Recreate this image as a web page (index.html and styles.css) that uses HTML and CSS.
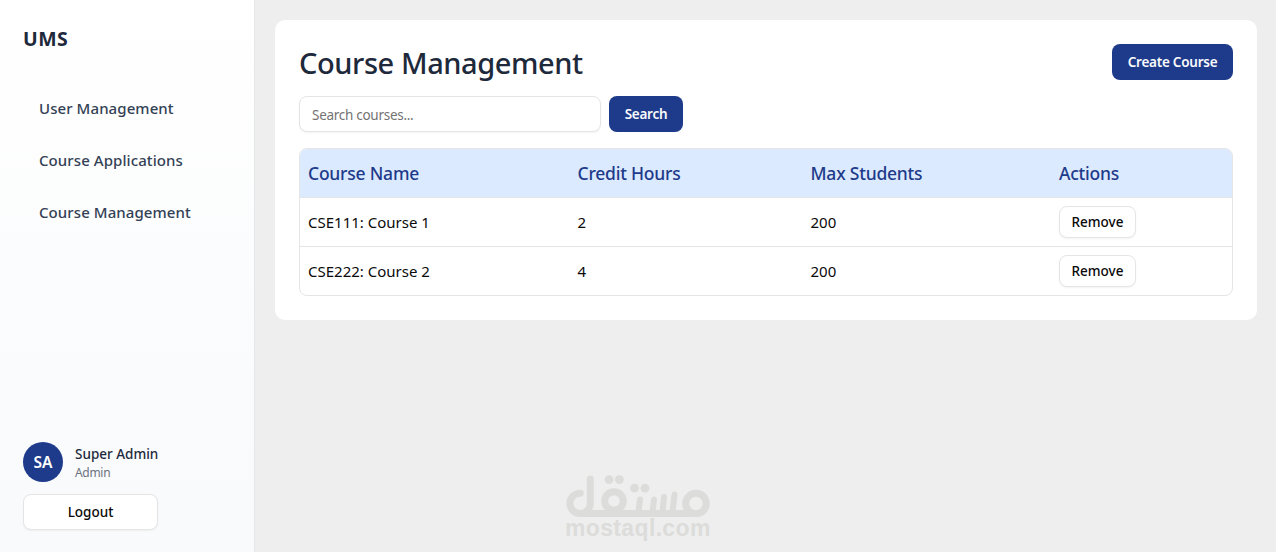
FILE: index.html
```
<!DOCTYPE html>
<html lang="en">
<head>
<meta charset="utf-8">
<title>UMS - Course Management</title>
<link rel="stylesheet" href="styles.css">
</head>
<body>
<div class="app">
  <aside class="sidebar">
    <div class="brand"><span class="brand-name">UMS</span></div>
    <nav class="nav">
      <a class="nav-link">User Management</a>
      <a class="nav-link">Course Applications</a>
      <a class="nav-link">Course Management</a>
    </nav>
    <div class="account">
      <div class="profile">
        <div class="avatar">SA</div>
        <div class="identity">
          <div class="user-name">Super Admin</div>
          <div class="user-role">Admin</div>
        </div>
      </div>
      <button class="btn btn-outline logout">Logout</button>
    </div>
  </aside>
  <main class="main">
    <section class="card">
      <header class="card-header">
        <h1 class="title">Course Management</h1>
        <button class="btn btn-primary create">Create Course</button>
      </header>
      <div class="search">
        <input class="search-input" type="text" placeholder="Search courses...">
        <button class="btn btn-primary search-btn">Search</button>
      </div>
      <div class="table">
        <div class="row row-head">
          <span>Course Name</span><span>Credit Hours</span><span>Max Students</span><span>Actions</span>
        </div>
        <div class="row">
          <span>CSE111: Course 1</span><span>2</span><span>200</span><span><button class="btn btn-outline remove">Remove</button></span>
        </div>
        <div class="row">
          <span>CSE222: Course 2</span><span>4</span><span>200</span><span><button class="btn btn-outline remove">Remove</button></span>
        </div>
      </div>
    </section>
    <div class="watermark">
      <svg class="watermark-logo" width="146" height="43" viewBox="0 0 146 43" fill="none" stroke="#dcdcda" stroke-width="7" stroke-linecap="round">
        <path d="M15.3 18.2A10.2 10.2 0 1 0 25.3 28.5V4"/>
        <path d="M15 38.5H131"/>
        <circle cx="49" cy="26" r="9.3"/>
        <circle cx="131" cy="28.5" r="10.3"/>
        <path stroke-width="6" d="M75 24.5L73.5 37M89 24.5L87.5 37M99 22L97.5 37M109.5 19.5L107.5 37"/>
        <g fill="#dcdcda" stroke="none">
          <circle cx="44" cy="4.6" r="4.4"/><circle cx="54.4" cy="4.6" r="4.4"/>
          <circle cx="69.5" cy="13.2" r="4.4"/><circle cx="80" cy="13.2" r="4.4"/>
        </g>
      </svg>
      <div class="watermark-text">mostaql.com</div>
    </div>
  </main>
</div>
</body>
</html>
```
FILE: styles.css
```
* { box-sizing: border-box; }
body {
  margin: 0;
  font-family: "Noto Sans", "Open Sans", sans-serif;
  font-size: 15px;
  color: #0a0a0a;
  background: #eeeeee;
}
.app { display: flex; height: 552px; overflow: hidden; }
.sidebar {
  width: 255px;
  flex: none;
  display: flex;
  flex-direction: column;
  border-right: 1px solid #e5e7eb;
  background: linear-gradient(#ffffff, #f9fafc 90%);
}
.brand { padding: 24px 23px 0; height: 84px; }
.brand-name { display: block; font-size: 19.5px; line-height: 29px; font-weight: 700; letter-spacing: 0.4px; color: #1e293b; }
.nav { display: flex; flex-direction: column; gap: 8px; padding: 0 23px; }
.nav-link { padding: 10px 16px; height: 44px; line-height: 28px; font-size: 15px; font-weight: 500; letter-spacing: 0.08px; color: #334155; white-space: nowrap; }
.account { margin-top: auto; padding: 0 23px 22px; display: flex; flex-direction: column; gap: 12px; align-items: flex-start; }
.profile { display: flex; gap: 12px; align-items: center; height: 40px; }
.avatar { width: 40px; height: 40px; border-radius: 50%; background: #1e3a8a; color: #fff; display: flex; align-items: center; justify-content: center; font-weight: 600; font-size: 15.5px; }
.user-name { font-size: 13.5px; line-height: 21px; font-weight: 500; color: #1e293b; }
.user-role { font-size: 12px; line-height: 15px; letter-spacing: -0.3px; color: #6b7280; }
.btn { font-family: inherit; font-size: 13.5px; font-weight: 500; border-radius: 8px; height: 36px; border: 0; padding: 0; white-space: nowrap; }
.btn-primary { background: #1e3a8a; color: #f8fafc; font-weight: 600; letter-spacing: -0.25px; }
.btn-outline { background: #fff; color: #0a0a0a; border: 1px solid #e5e5e5; box-shadow: 0 1px 2px rgba(0, 0, 0, .05); }
.logout { width: 135px; }
.main { flex: 1; padding: 20px 19px 13px 20px; display: flex; flex-direction: column; }
.card { background: #fff; border-radius: 10px; padding: 24px; height: 300px; }
.card-header { display: flex; justify-content: space-between; align-items: flex-start; height: 52px; }
.title { margin: 0; font-size: 29px; line-height: 38px; font-weight: 500; letter-spacing: -0.42px; color: #1e293b; white-space: nowrap; }
.create { width: 121px; }
.search { display: flex; gap: 8px; margin-bottom: 16px; }
.search-input { width: 302px; height: 36px; border: 1px solid #e5e5e5; border-radius: 8px; padding: 2px 12px 0; font-family: inherit; font-size: 13.5px; letter-spacing: -0.28px; box-shadow: 0 1px 2px rgba(0, 0, 0, .05); }
.search-input::placeholder { color: #737373; opacity: 1; }
.search-btn { width: 74px; }
.table { border: 1px solid #e5e5e5; border-radius: 8px; overflow: hidden; }
.row { display: grid; grid-template-columns: 269.5px 233px 248.5px 1fr; align-items: center; height: 49px; padding-left: 8px; font-size: 15px; border-bottom: 1px solid #e5e5e5; }
.row:last-child { height: 48px; border-bottom: 0; }
.row-head { background: #dbeafe; color: #1e3a8a; font-weight: 500; font-size: 17.5px; letter-spacing: -0.22px; }
.remove { width: 77px; height: 32px; display: block; padding-bottom: 1px; }
.watermark { margin: auto auto 0; width: 146px; position: relative; left: -128px; color: #dcdcda; }
.watermark-logo { display: block; overflow: visible; }
.watermark-text { font-family: "Liberation Sans", Arial, sans-serif; font-weight: 700; font-size: 23px; line-height: 21px; letter-spacing: 0.35px; white-space: nowrap; }
```
